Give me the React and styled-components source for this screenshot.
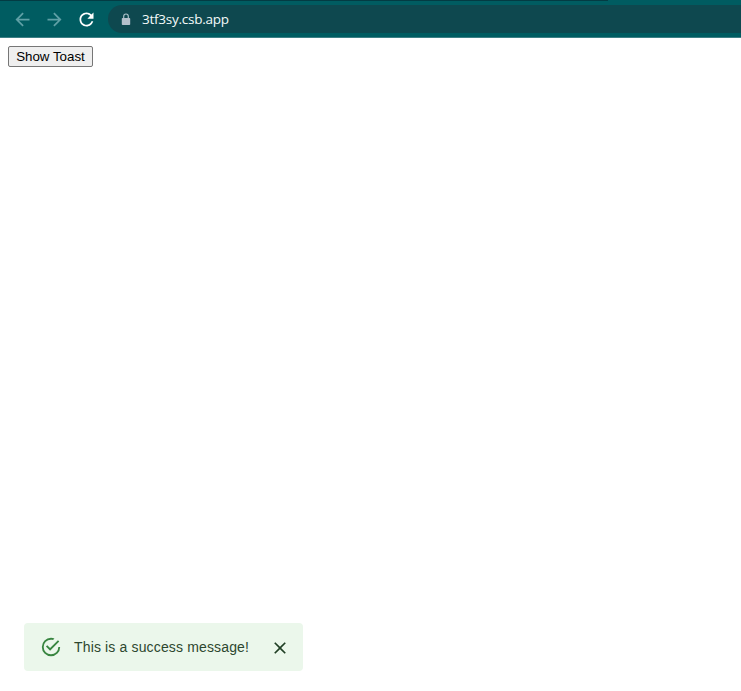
import React from "react";
import styled, { createGlobalStyle } from "styled-components";

const GlobalStyle = createGlobalStyle`
  *, *::before, *::after { box-sizing: border-box; }
  html, body { margin: 0; background: #fff; overflow: hidden; }
`;

const Window = styled.div`
  height: 100vh;
  display: flex;
  flex-direction: column;
`;

const TabEdge = styled.div`
  width: 608px;
  height: 1px;
  background: #033b43;
`;

const Chrome = styled.header`
  height: 38px;
  flex: none;
  background: #005c61;
  border-bottom: 1px solid #3d7f85;
`;

const Toolbar = styled.div`
  height: 36px;
  display: flex;
  align-items: center;
  padding-left: 11.5px;
`;

const NavButton = styled.span`
  width: 21px;
  height: 21px;
  margin-right: 11px;
  display: flex;
  color: ${(p) => (p.$active ? "#ffffff" : "#5fa0a6")};
`;

const AddressBar = styled.div`
  flex: 1;
  height: 28px;
  display: flex;
  align-items: center;
  margin-left: 0.5px;
  padding-left: 13px;
  border-radius: 14px 0 0 14px;
  background: #0e484f;
`;

const Url = styled.span`
  margin-left: 11px;
  color: #f4fafa;
  font: 500 13.5px/18px "Open Sans", "Noto Sans", sans-serif;
  letter-spacing: -0.25px;
`;

const Page = styled.main`
  padding: 8px;
  display: flex;
`;

const ShowButton = styled.button`
  width: 85px;
  height: 21px;
  padding: 0;
  border: 1px solid #767676;
  border-radius: 2px;
  background: #efefef;
  color: #000;
  font: 13.333px/15px "Liberation Sans", Arial, sans-serif;
  white-space: nowrap;
`;

const Toast = styled.div`
  position: fixed;
  left: 24px;
  bottom: 20px;
  width: 279px;
  height: 48px;
  padding: 0 13px 0 16px;
  display: flex;
  align-items: center;
  border-radius: 4px;
  background: #ebf7eb;
`;

const StatusIcon = styled.span`
  width: 22px;
  height: 22px;
  margin-right: 12px;
  display: flex;
  color: #388540;
`;

const Message = styled.span`
  flex: 1;
  color: #2d472f;
  font: 14px/20px "Liberation Sans", Arial, sans-serif;
  letter-spacing: 0.15px;
  white-space: nowrap;
`;

const CloseButton = styled.span`
  width: 20px;
  height: 20px;
  margin-top: 2px;
  display: flex;
  color: #203f24;
`;

const Icon = ({ size, d }) => (
  <svg width={size} height={size} viewBox="0 0 24 24" fill="currentColor" aria-hidden="true">
    <path d={d} />
  </svg>
);

const LockIcon = () => (
  <svg width="10" height="13" viewBox="0 0 10 13" fill="none" aria-hidden="true">
    <path d="M2.7 5.5V3.3a2.3 2.3 0 0 1 4.6 0v2.2" stroke="#a9bfc8" strokeWidth="1.2" />
    <rect x="0.8" y="5" width="8.4" height="7" rx="0.8" fill="#b3bfca" />
  </svg>
);

const paths = {
  back: "M20 11H7.83l5.59-5.59L12 4l-8 8 8 8 1.41-1.41L7.83 13H20v-2z",
  forward: "M12 4l-1.41 1.41L16.17 11H4v2h12.17l-5.58 5.59L12 20l8-8z",
  reload:
    "M17.65 6.35C16.2 4.9 14.21 4 12 4c-4.42 0-7.99 3.58-7.99 8s3.57 8 7.99 8c3.73 0 6.84-2.55 7.73-6h-2.08c-.82 2.33-3.04 4-5.65 4-3.31 0-6-2.69-6-6s2.69-6 6-6c1.66 0 3.14.69 4.22 1.78L13 11h7V4l-2.35 2.35z",
  success:
    "M20,12A8,8 0 0,1 12,20A8,8 0 0,1 4,12A8,8 0 0,1 12,4C12.76,4 13.5,4.11 14.2,4.31L15.77,2.74C14.61,2.26 13.34,2 12,2A10,10 0 0,0 2,12A10,10 0 0,0 12,22A10,10 0 0,0 22,12M7.91,10.08L6.5,11.5L11,16L21,6L19.59,4.58L11,13.17L7.91,10.08Z",
  close:
    "M19 6.41L17.59 5 12 10.59 6.41 5 5 6.41 10.59 12 5 17.59 6.41 19 12 13.41 17.59 19 19 17.59 13.41 12z",
};

export default function App() {
  return (
    <Window>
      <GlobalStyle />
      <Chrome>
        <TabEdge />
        <Toolbar>
          <NavButton><Icon size={21} d={paths.back} /></NavButton>
          <NavButton><Icon size={21} d={paths.forward} /></NavButton>
          <NavButton $active><Icon size={21} d={paths.reload} /></NavButton>
          <AddressBar>
            <LockIcon />
            <Url>3tf3sy.csb.app</Url>
          </AddressBar>
        </Toolbar>
      </Chrome>
      <Page>
        <ShowButton>Show Toast</ShowButton>
      </Page>
      <Toast role="alert">
        <StatusIcon><Icon size={22} d={paths.success} /></StatusIcon>
        <Message>This is a success message!</Message>
        <CloseButton><Icon size={20} d={paths.close} /></CloseButton>
      </Toast>
    </Window>
  );
}
